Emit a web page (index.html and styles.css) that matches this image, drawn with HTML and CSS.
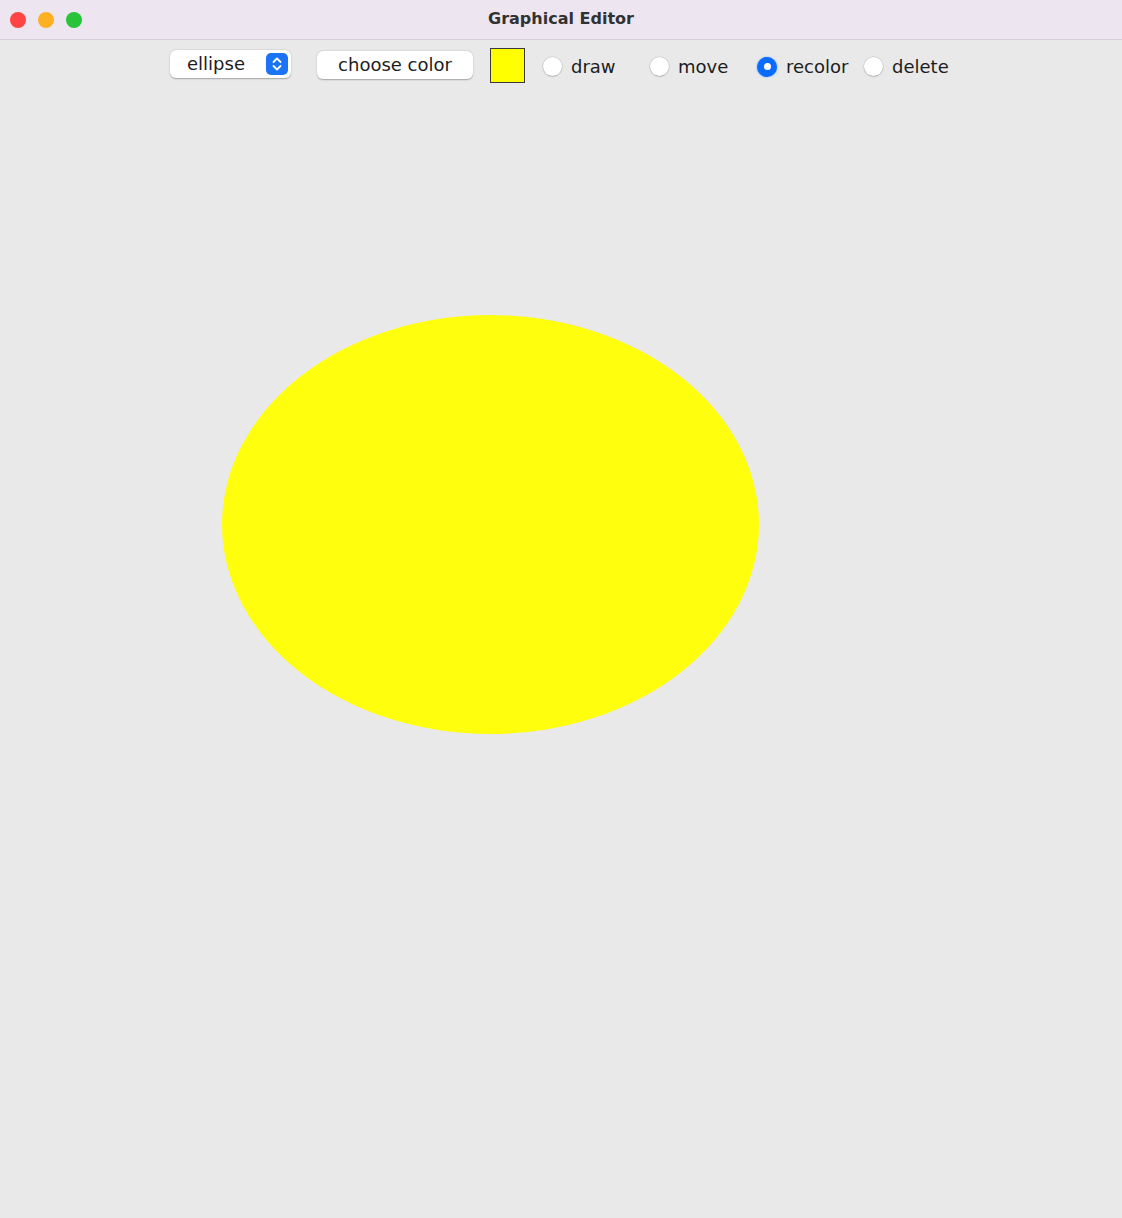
FILE: index.html
```html
<!DOCTYPE html>
<html>
<head>
<meta charset="utf-8">
<title>Graphical Editor</title>
<link rel="stylesheet" href="styles.css">
</head>
<body>
<div class="window">
  <header class="titlebar">
    <div class="lights">
      <span class="light red"></span>
      <span class="light yellow"></span>
      <span class="light green"></span>
    </div>
    <div class="title">Graphical Editor</div>
  </header>
  <div class="toolbar">
    <div class="combo">
      <span class="combo-text">ellipse</span>
      <span class="combo-arrow">
        <svg width="22" height="22" viewBox="0 0 22 22"><path d="M7.5 9 L11 5.5 L14.5 9 M7.5 13 L11 16.5 L14.5 13" fill="none" stroke="#fff" stroke-width="1.8" stroke-linecap="round" stroke-linejoin="round"/></svg>
      </span>
    </div>
    <button class="btn">choose color</button>
    <div class="swatch"></div>
    <div class="radios">
      <label class="radio"><span class="dot"></span><span class="rlabel">draw</span></label>
      <label class="radio"><span class="dot"></span><span class="rlabel">move</span></label>
      <label class="radio"><span class="dot on"></span><span class="rlabel">recolor</span></label>
      <label class="radio last"><span class="dot"></span><span class="rlabel">delete</span></label>
    </div>
  </div>
  <div class="canvas">
    <svg class="drawing" width="1122" height="1128" viewBox="0 90 1122 1128">
      <ellipse cx="490.5" cy="524.5" rx="268.5" ry="209.5" fill="#ffff0d"/>
    </svg>
  </div>
</div>
</body>
</html>
```

FILE: styles.css
```css
html, body {
  margin: 0;
  padding: 0;
  background: #e9e9e9;
}
body {
  font-family: "DejaVu Sans", "Open Sans", sans-serif;
  color: #1c1c1c;
}
.window {
  width: 1122px;
  height: 1218px;
  display: flex;
  flex-direction: column;
  background: #e9e9e9;
  overflow: hidden;
}
.titlebar {
  height: 39px;
  flex: none;
  background: #ede6f1;
  border-bottom: 1px solid #d4d0d6;
  display: flex;
  align-items: center;
  position: relative;
}
.lights {
  display: flex;
  gap: 12px;
  padding-left: 10px;
}
.light {
  width: 16px;
  height: 16px;
  border-radius: 50%;
  display: block;
}
.red { background: #fe4544; }
.yellow { background: #fdb022; }
.green { background: #29c33a; }
.title {
  position: absolute;
  left: 0;
  right: 0;
  top: 0;
  line-height: 37px;
  text-align: center;
  font-weight: 700;
  font-size: 16px;
  color: #323232;
  pointer-events: none;
}
.toolbar {
  height: 50px;
  flex: none;
  display: flex;
  align-items: center;
  padding-left: 170px;
  box-sizing: border-box;
}
.combo {
  width: 121px;
  height: 28px;
  box-sizing: border-box;
  background: #fff;
  border-radius: 6px;
  box-shadow: 0 0.5px 1.5px rgba(0,0,0,0.3);
  display: flex;
  align-items: center;
  padding-left: 17px;
  padding-right: 3px;
  margin-top: -3px;
}
.combo-text {
  flex: 1;
  font-size: 18px;
  line-height: 28px;
}
.combo-arrow {
  width: 22px;
  height: 22px;
  border-radius: 5px;
  background: #1b74f3;
  display: block;
}
.combo-arrow svg { display: block; }
.btn {
  margin-left: 26px;
  width: 156px;
  height: 28px;
  border: none;
  background: #fff;
  border-radius: 6px;
  box-shadow: 0 0.5px 1.5px rgba(0,0,0,0.3);
  font-family: inherit;
  font-size: 18px;
  color: #1c1c1c;
  padding: 0;
  line-height: 28px;
  margin-top: -1px;
}
.swatch {
  margin-left: 17px;
  width: 35px;
  height: 35px;
  box-sizing: border-box;
  background: #ffff00;
  border: 1px solid #3a3a3a;
}
.radios {
  display: flex;
  margin-left: 18px;
  padding-top: 3px;
}
.radio {
  width: 107px;
  display: flex;
  align-items: center;
}
.radio.last { width: auto; }
.dot {
  width: 19px;
  height: 19px;
  box-sizing: border-box;
  border-radius: 50%;
  background: #fff;
  box-shadow: 0 0 0 0.5px rgba(0,0,0,0.12), 0 0.5px 1.5px rgba(0,0,0,0.25);
  display: block;
  position: relative;
}
.dot.on {
  width: 20px;
  height: 20px;
  background: #0a6cff;
  box-shadow: 0 0 2px rgba(10,108,255,0.6);
}
.dot.on::after {
  content: "";
  position: absolute;
  left: 6.5px;
  top: 6.5px;
  width: 7px;
  height: 7px;
  border-radius: 50%;
  background: #fff;
}
.rlabel {
  margin-left: 9px;
  font-size: 18px;
  line-height: 22px;
}
.canvas {
  flex: 1;
  position: relative;
}
.drawing {
  display: block;
}
```
